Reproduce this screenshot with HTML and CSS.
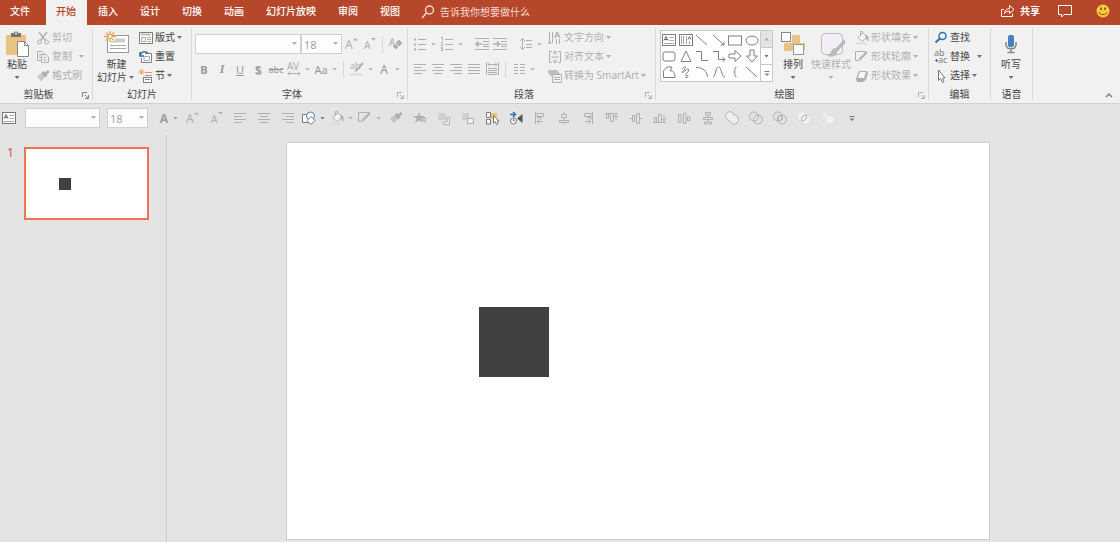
FILE: index.html
```html
<!DOCTYPE html>
<html lang="zh-CN">

<head>
    <meta charset="UTF-8">
    <meta name="viewport" content="width=device-width, initial-scale=1.0">
    <title>演示文稿</title>
    <link rel="stylesheet" href="styles.css">
</head>

<body>
    <!-- icon sprite -->
    <svg class="sprite" aria-hidden="true">
        <symbol id="i-search" viewBox="0 0 16 16"><circle cx="9.500" cy="6" r="4" stroke-width="1.400" /><path d="M6.500 9L2 14" stroke-width="1.400" /></symbol>
        <symbol id="i-share" viewBox="0 0 16 16"><path d="M4 6.500H1.500V13.500H12.500V10.500M4.500 10.500C5 7 7 5.500 9.500 5.500V2.500L14 6.500L9.500 10.500V8C7.500 8 6 8.500 4.500 10.500Z" /></symbol>
        <symbol id="i-comment" viewBox="0 0 16 16"><path d="M1.500 2.500H14.500V11.500H7L4.500 14V11.500H1.500Z" /></symbol>
        <symbol id="i-smile" viewBox="0 0 16 16"><circle cx="8" cy="8" r="6.500" fill="#fcc938" stroke="none" /><path d="M6 4.500V7M10 4.500V7" stroke="#6b4a1a" stroke-width="1.500" /><path d="M4 9C5 12.500 11 12.500 12 9" stroke="#8a4a1a" /></symbol>

        <symbol id="i-paste" viewBox="0 0 28 28"><path d="M3 5H23V25H3Z" fill="#eac282" stroke="none" /><path d="M8 3H11C11 1 15 1 15 3H18V7H8Z" fill="#777" stroke="none" /><circle cx="13" cy="3.500" r="1" fill="#f1f1f1" stroke="none" /><path d="M14.500 11.500H21.500L25.500 15.500V26.500H14.500Z" fill="#fff" stroke="#888" /><path d="M21.500 11.500V15.500H25.500" stroke="#888" /></symbol>
        <symbol id="i-cut" viewBox="0 0 16 16"><path d="M4 2L10.500 10.500M12 2L5.500 10.500" stroke-width="1.500" /><circle cx="4.500" cy="12" r="2" /><circle cx="11.500" cy="12" r="2" /></symbol>
        <symbol id="i-copy" viewBox="0 0 16 16"><path d="M6 11.500H2.500V2.500H7L9.500 5M4 5.500H6M4 8.500H6M6.500 5.500H11L13.500 8V13.500H6.500ZM8.500 8.500H11M8.500 11H12" /></symbol>
        <symbol id="i-brush" viewBox="0 0 16 16"><path d="M2 8L7 5L10 9L6 13.500Z" fill="currentColor" stroke="none" opacity=".6" /><path d="M7 5L9 3.500L12 7.500L10 9ZM10 5L13 2.500L14 4L12 6Z" fill="currentColor" /></symbol>
        <symbol id="i-newslide" viewBox="0 0 28 28"><rect x="4.500" y="5.500" width="21" height="17" fill="#fff" stroke="#999" /><path d="M12 8.500H22V12.500H8V11H12Z" fill="#ccc" stroke="none" /><path d="M7 15.500H23M7 18.500H23" stroke="#aaa" /><path d="M7 1V12M1 6.500H13M3 2.500L11 10.500M11 2.500L3 10.500" stroke="#e8ad58" stroke-width="1.500" /><circle cx="7" cy="6.500" r="2" fill="#fff" stroke="#e8ad58" /></symbol>
        <symbol id="i-layout" viewBox="0 0 16 16"><rect x="1.500" y="2.500" width="13" height="11" fill="#fff" /><path d="M3 4.500H13" stroke="#bbb" stroke-width="2" /><path d="M3.500 7.500H7.500V11.500H3.500ZM9 7.500H13M9 9.500H13M9 11.500H13" stroke="#aaa" /></symbol>
        <symbol id="i-reset" viewBox="0 0 16 16"><path d="M7 4.500H13.500V13.500H3.500V9" fill="#fff" /><path d="M6 7.500H11.500V11.500H6Z" stroke="#aaa" /><path d="M2 7C3 2.500 7 1.500 10 4M2 3V7H6" stroke="#2f6da8" stroke-width="1.500" /></symbol>
        <symbol id="i-section" viewBox="0 0 16 16"><path d="M7 4.500H14M7 7.500H14" stroke="#df8b66" /><rect x="5.500" y="9.500" width="8" height="5" fill="#fff" /><path d="M7 11.500H12" /><path d="M3.500 1V7M.5 4H6.500M1.500 2L5.500 6M5.500 2L1.500 6" stroke="#e8ad58" /></symbol>

        <symbol id="i-grow" viewBox="0 0 16 16"><text x="2" y="13" font-size="12">A</text><path d="M10 4.500L12.500 2L15 4.500Z" fill="currentColor" stroke="none" /></symbol>
        <symbol id="i-shrink" viewBox="0 0 16 16"><text x="3" y="13" font-size="10">A</text><path d="M10 2L12.500 4.500L15 2Z" fill="currentColor" stroke="none" /></symbol>
        <symbol id="i-clear" viewBox="0 0 16 16"><text x="1" y="10" font-size="10">A</text><path d="M4 10L11 3L15 7L8 14Z" fill="currentColor" stroke="#f1f1f1" /><path d="M7 7L11 11" stroke="#f1f1f1" /></symbol>
        <symbol id="i-spacing" viewBox="0 0 16 16"><text x="1" y="9" font-size="10">AV</text><path d="M2 12.500H14M4 10.500L2 12.500L4 14.500M12 10.500L14 12.500L12 14.500" /></symbol>
        <symbol id="i-highlight" viewBox="0 0 16 16"><text x="1" y="8" font-size="9">ab</text><path d="M14 2L8 9L6 10" stroke-width="2" /><path d="M1 13.500H14" stroke="#ddd" stroke-width="2" /></symbol>

        <symbol id="i-bullets" viewBox="0 0 16 16"><path d="M6 3.500H14M6 8.500H14M6 13.500H14" /><path d="M2 3.500H4M2 8.500H4M2 13.500H4" stroke-width="2" /></symbol>
        <symbol id="i-numbers" viewBox="0 0 16 16"><path d="M6 3.500H14M6 8.500H14M6 13.500H14" /><path d="M2 1.500H3.500V4.500M2 6.500H3.500V8L2 9.500H4M2 11.500H3.500V14.500H2M2 13H3.500" /></symbol>
        <symbol id="i-outdent" viewBox="0 0 16 16"><path d="M1 2.500H15M9 5.500H15M9 8.500H15M9 10.500H15M1 13.500H15" /><path d="M1.500 8H8M4.500 5.500L2 8L4.500 10.500" stroke-width="1.500" /></symbol>
        <symbol id="i-indent" viewBox="0 0 16 16"><path d="M1 2.500H15M9 5.500H15M9 8.500H15M9 10.500H15M1 13.500H15" /><path d="M1 8H7.500M5 5.500L7.500 8L5 10.500" stroke-width="1.500" /></symbol>
        <symbol id="i-lineheight" viewBox="0 0 16 16"><path d="M4.500 2.500V13.500M2 5L4.500 2.500L7 5M2 11L4.500 13.500L7 11M8 4.500H14M8 8.500H14M8 11.500H14" /></symbol>
        <symbol id="i-left" viewBox="0 0 16 16"><path d="M2 3.500H14M2 6.500H10M2 9.500H14M2 12.500H10" /></symbol>
        <symbol id="i-center" viewBox="0 0 16 16"><path d="M2 3.500H14M4 6.500H12M2 9.500H14M4 12.500H12" /></symbol>
        <symbol id="i-right" viewBox="0 0 16 16"><path d="M2 3.500H14M6 6.500H14M2 9.500H14M6 12.500H14" /></symbol>
        <symbol id="i-justify" viewBox="0 0 16 16"><path d="M2 3.500H14M2 6.500H14M2 9.500H14M2 12.500H14" /></symbol>
        <symbol id="i-distribute" viewBox="0 0 16 16"><path d="M2.500 1V14M14.500 1V14M4 3.500H13M6 1.500L4 3.500L6 5.500M11 1.500L13 3.500L11 5.500M4 7.500H13M4 9.500H13M4 11.500H13M4 13.500H13" /></symbol>
        <symbol id="i-columns" viewBox="0 0 16 16"><path d="M3 3.500H7M3 6.500H7M3 9.500H7M3 12.500H7M9 3.500H14M9 6.500H14M9 9.500H14M9 12.500H14" /></symbol>
        <symbol id="i-direction" viewBox="0 0 16 16"><path d="M2.500 2V13M5.500 2V13M9.500 9V14M12.500 9V14M1 12L2.500 14L4 12" /><text x="7" y="8" font-size="9" font-weight="bold">A</text></symbol>
        <symbol id="i-valign" viewBox="0 0 16 16"><path d="M5 2.500H2.500V13.500H5M11 2.500H13.500V13.500H11M4.500 8H11.500M8 2V6M6 4.500L8 2L10 4.500M8 10V14M6 11.500L8 14L10 11.500" /></symbol>
        <symbol id="i-smartart" viewBox="0 0 16 16"><path d="M1 2H10L13 6H5V9L3 7L1 5Z" fill="currentColor" stroke="none" opacity=".8" /><path d="M5.500 6.500H14.500V14.500H5.500ZM7 9.500H13M7 11.500H13" fill="#f1f1f1" /></symbol>

        <symbol id="i-textbox" viewBox="0 0 16 16"><rect x="1.500" y="2.500" width="13" height="11" fill="#fff" /><path d="M3 8.500L5 4.500L7 8.500M3.500 7.500H6.500" stroke="#4c7199" /><path d="M8.500 5.500H13M8.500 8.500H13M3 11.500H13" stroke="#aaa" /></symbol>
        <symbol id="i-vtextbox" viewBox="0 0 16 16"><rect x="1.500" y="2.500" width="13" height="11" fill="#fff" /><path d="M3.500 4V12M5.500 4V12M8.500 4V12M11.500 9V12" stroke="#aaa" /><path d="M10 7.500L11.500 4.500L13 7.500" stroke="#4c7199" /></symbol>
        <symbol id="i-line" viewBox="0 0 16 16"><path d="M2 3L13 13" /></symbol>
        <symbol id="i-arrow" viewBox="0 0 16 16"><path d="M2 3L13 13M13 9.500V13H9.500" /></symbol>
        <symbol id="i-rect" viewBox="0 0 16 16"><rect x="1.500" y="4" width="13" height="9" /></symbol>
        <symbol id="i-oval" viewBox="0 0 16 16"><ellipse cx="8" cy="8.500" rx="6" ry="4.500" /></symbol>
        <symbol id="i-round" viewBox="0 0 16 16"><rect x="2" y="4" width="12" height="9" rx="2" /></symbol>
        <symbol id="i-triangle" viewBox="0 0 16 16"><path d="M8 3L13 13.500H3Z" /></symbol>
        <symbol id="i-elbow" viewBox="0 0 16 16"><path d="M2 3.500H7.500V12.500H14" /></symbol>
        <symbol id="i-elbowarrow" viewBox="0 0 16 16"><path d="M2 3.500H7.500V11.500H14M11.500 9L14 11.500L11.500 14" /></symbol>
        <symbol id="i-rarrow" viewBox="0 0 16 16"><path d="M2 6H8V2.500L14 8L8 13.500V10H2Z" /></symbol>
        <symbol id="i-darrow" viewBox="0 0 16 16"><path d="M6 2V8H2.500L8 14L13.500 8H10V2Z" /></symbol>
        <symbol id="i-free" viewBox="0 0 16 16"><path d="M2.500 13.500V7L6 3H11L9 7C12 6 14 9 14 13.500Z" /></symbol>
        <symbol id="i-scribble" viewBox="0 0 16 16"><path d="M4 5C7 1 9 3 6 6C2 10 5 9 8 6C12 3 11 8 8 10C6 12 9 11 10 12C10 14 8 14 7 13" /></symbol>
        <symbol id="i-arc" viewBox="0 0 16 16"><path d="M2 3.500C9 3.500 13 7 13.500 13" /></symbol>
        <symbol id="i-curve" viewBox="0 0 16 16"><path d="M2 13C5 13 4 3 7.500 3S10 13 14 13" /></symbol>
        <symbol id="i-brace" viewBox="0 0 16 16"><path d="M9.500 3C7.500 3 8 5 8 6.500S7 8 6.500 8C7 8 8 8 8 9.500S7.500 13 9.500 13" /></symbol>
        <symbol id="i-more" viewBox="0 0 16 16"><path d="M5.500 6.500H10.500" /><path d="M5.500 8.500H10.500L8 11Z" fill="currentColor" stroke="none" /></symbol>
        <symbol id="i-arrange" viewBox="0 0 28 28"><path d="M13 5H21V13H26V20H13V21H5V13H13Z" fill="#eac282" stroke="none" /><rect x="2.500" y="2.500" width="9" height="9" fill="#fff" stroke="#888" /><rect x="14.500" y="14.500" width="10" height="10" fill="#fff" stroke="#999" /></symbol>
        <symbol id="i-quick" viewBox="0 0 28 28"><rect x="4.500" y="3.500" width="21" height="21" rx="4" fill="#f3eef5" stroke="#bbb" /><path d="M28 9L18 19L20 22L28 13Z" fill="#b0b6bf" stroke="none" /><path d="M18 18C14 18 15 24 10 26C17 28 21 25 20 21Z" fill="#bbb" stroke="none" /></symbol>
        <symbol id="i-fill" viewBox="0 0 16 16"><path d="M4 7.500L9 3L13 7L8 11.500Z" fill="#f8f4f8" /><path d="M6.500 6V1.500H8.500V4" /><path d="M12 5L14 7V11L12 8Z" fill="currentColor" /><path d="M2 13.500H13" stroke="#ddd" stroke-width="2" /></symbol>
        <symbol id="i-outline" viewBox="0 0 16 16"><path d="M12 2.500H1.500V11.500H5" /><path d="M13 3L7 9L5.500 11" stroke-width="2" /></symbol>
        <symbol id="i-effect" viewBox="0 0 16 16"><path d="M5 3H13L14 5L12 12L9 14H3L2 11Z" fill="currentColor" stroke="none" /><path d="M5.500 3.500H12.500L10.500 10.500H3Z" fill="#f8f4f8" /></symbol>
        <symbol id="i-find" viewBox="0 0 16 16"><circle cx="9.500" cy="6" r="3.500" stroke="#3570ad" stroke-width="1.500" /><path d="M7 8.500L2.500 12.500" stroke="#3570ad" stroke-width="2" /></symbol>
        <symbol id="i-replace" viewBox="0 0 16 16"><text x="1" y="7" font-size="9">ab</text><text x="5" y="14" font-size="9">ac</text><path d="M2 11.500H4.500M3 10L4.500 11.500L3 13" stroke="#3570ad" /></symbol>
        <symbol id="i-select" viewBox="0 0 16 16"><path d="M5.500 2V12.500L7.500 10.500L9.500 14.500L11 13.500L9.500 10H12Z" fill="#fff" stroke="#777" /></symbol>
        <symbol id="i-mic" viewBox="0 0 28 28"><rect x="11" y="5" width="6" height="12" rx="2" fill="#4682bd" stroke="none" /><path d="M9 12V15.500L11 18.500H17L19 15.500V12M14 19V22.500M10.500 22.500H17.500" stroke="#888" stroke-width="1.500" /></symbol>
        <symbol id="i-launch" viewBox="0 0 16 16"><path d="M5.500 10V5.500H10M8 8L11 11M11.500 8V11.500H8" /></symbol>
        <symbol id="i-collapse" viewBox="0 0 16 16"><path d="M5 10L8 7L11 10" stroke-width="1.500" /></symbol>

        <symbol id="i-shapes" viewBox="0 0 16 16"><path d="M1.500 4.500H8V12.500H1.500Z" fill="#fff" /><circle cx="9.500" cy="6" r="4" fill="#fff" stroke="#4682bd" /><path d="M10 6.500L14 10.500L10 14.500L6 10.500Z" fill="#fff" /></symbol>
        <symbol id="i-star" viewBox="0 0 16 16"><path d="M7 2L8.500 6H13L9.500 8.500L11 13L7 10.500L3 13L4.500 8.500L1 6H5.500Z" fill="currentColor" stroke="none" /><path d="M10 9L14 12M11 7L14 9" stroke-width="1.500" /></symbol>
        <symbol id="i-front" viewBox="0 0 16 16"><rect x="2" y="3" width="8" height="7" fill="#cfcfd1" stroke="none" /><path d="M11 7.500H13.500V14.500H7.500V12H11Z" fill="#f3f0f3" /></symbol>
        <symbol id="i-back" viewBox="0 0 16 16"><rect x="2" y="3" width="7" height="7" fill="#cfcfd1" stroke="none" /><rect x="7.500" y="8.500" width="6" height="5" fill="#f3f0f3" /></symbol>
        <symbol id="i-pane" viewBox="0 0 16 16"><path d="M7 3H13V9H7Z" fill="#eac282" stroke="none" /><path d="M2.500 2.500H6.500V7.500H2.500ZM2.500 9.500H6.500V14H2.500Z" fill="#fff" /><path d="M9.500 5.500V13L11 11.500L12.500 14.500L14 13.500L13 11H15Z" fill="#fff" /></symbol>
        <symbol id="i-anim" viewBox="0 0 16 16"><path d="M2 4.500H7M5 2L7.500 4.500L5 7" stroke="#3570ad" stroke-width="1.500" /><circle cx="5.500" cy="11" r="3" fill="#fff" /><path d="M5.500 9V11H7" /><path d="M9 8.500L14.500 4V13Z" fill="#555" stroke="none" /></symbol>
        <symbol id="i-al" viewBox="0 0 16 16"><path d="M3.500 2V14M5 3.500H11.500V6.500H5ZM5 7.500H9V9.500M5 11.500H11M7.500 9.500L5 11.500L7.500 14" /></symbol>
        <symbol id="i-ac" viewBox="0 0 16 16"><path d="M8 2V4M5.500 4.500H10.500V7.500H5.500ZM8 8V10M3.500 10.500H12.500V12.500H3.500ZM8 13V14.500" /></symbol>
        <symbol id="i-ar" viewBox="0 0 16 16"><path d="M12.500 2V14M4.500 3.500H11V6.500H4.500ZM7 7.500H11V9.500M5 11.500H10.500M8.500 9.500L10.500 11.500L8.500 14" /></symbol>
        <symbol id="i-at" viewBox="0 0 16 16"><path d="M1 3.500H14M2.500 4V8.500H4.500V4M6.500 4V11.500H9.500V4M12 10V5M10 7L12 5L14 7" /></symbol>
        <symbol id="i-am" viewBox="0 0 16 16"><path d="M2 8.500H4M4.500 5.500H6.500V11.500H4.500ZM8.500 3.500H11.500V13.500H8.500ZM12 8.500H14" /></symbol>
        <symbol id="i-ab" viewBox="0 0 16 16"><path d="M1 12.500H14M2.500 12V7.500H4.500V12M6.500 12V4.500H9.500V12M12 5V11M10 9L12 11L14 9" /></symbol>
        <symbol id="i-dh" viewBox="0 0 16 16"><path d="M2.500 4.500H5V12.500H2.500ZM7.500 3.500H10V13.500H7.500ZM11.500 7H14V10.500H11.500Z" /></symbol>
        <symbol id="i-dv" viewBox="0 0 16 16"><path d="M5.500 2.500H10.500V5H5.500ZM3.500 7.500H12.500V9.500H3.500ZM4.500 12H11.500V14H4.500ZM8 5V7M8 10V12" /></symbol>
        <symbol id="i-union" viewBox="0 0 16 16"><path d="M3 3C6 .5 9 2 10 5C14 5 16 10 13 13C10 16 6 13 6 11C2 10 0 6 3 3Z" fill="#eee" /></symbol>
        <symbol id="i-combine" viewBox="0 0 16 16"><circle cx="6" cy="6.500" r="4.500" /><circle cx="10" cy="9.500" r="4.500" /></symbol>
        <symbol id="i-fragment" viewBox="0 0 16 16"><circle cx="6" cy="6.500" r="4.500" /><circle cx="10" cy="9.500" r="4.500" /><circle cx="8" cy="8" r="2.500" /></symbol>
        <symbol id="i-intersect" viewBox="0 0 16 16"><g fill="#f4f0f6" stroke="#ccc" stroke-dasharray="1 2"><circle cx="6" cy="6.500" r="4.500" /><circle cx="10" cy="9.500" r="4.500" /></g><path d="M5.500 10.500C5 7 7 5 10.500 5.500C11 9 9 11 5.500 10.500Z" /></symbol>
        <symbol id="i-subtract" viewBox="0 0 16 16"><circle cx="6" cy="6.500" r="4.500" fill="#efecef" stroke="#ccc" stroke-dasharray="1 2" /><circle cx="10" cy="9.500" r="4.500" fill="#f6f1f8" stroke="#ddd" /></symbol>
    </svg>

    <header class="titlebar">
        <nav class="tabs">
            <a href="#" class="tab file">文件</a>
            <a href="#" class="tab active">开始</a>
            <a href="#" class="tab">插入</a>
            <a href="#" class="tab">设计</a>
            <a href="#" class="tab">切换</a>
            <a href="#" class="tab">动画</a>
            <a href="#" class="tab">幻灯片放映</a>
            <a href="#" class="tab">审阅</a>
            <a href="#" class="tab">视图</a>
        </nav>
        <label class="search">
            <svg class="icon"><use href="#i-search" /></svg>
            <input type="text" placeholder="告诉我你想要做什么" aria-label="告诉我你想要做什么">
        </label>
        <div class="account">
            <button class="share"><svg class="icon"><use href="#i-share" /></svg>共享</button>
            <button aria-label="批注"><svg class="icon"><use href="#i-comment" /></svg></button>
            <button aria-label="反馈"><svg class="icon"><use href="#i-smile" /></svg></button>
        </div>
    </header>

    <div class="ribbon">
        <section class="group clipboard">
            <div class="group-body">
                <button class="big"><svg><use href="#i-paste" /></svg><span>粘贴</span><span><i class="caret"></i></span></button>
                <div class="stack">
                    <button class="small off"><svg class="icon"><use href="#i-cut" /></svg>剪切</button>
                    <button class="small off split"><svg class="icon"><use href="#i-copy" /></svg>复制<i class="caret"></i></button>
                    <button class="small off"><svg class="icon"><use href="#i-brush" /></svg>格式刷</button>
                </div>
            </div>
            <div class="group-label"><span>剪贴板</span><button class="launcher" aria-label="剪贴板选项"><svg class="icon"><use href="#i-launch" /></svg></button></div>
        </section>

        <section class="group slides">
            <div class="group-body">
                <button class="big"><svg><use href="#i-newslide" /></svg><span>新建</span><span>幻灯片<i class="caret"></i></span></button>
                <div class="stack">
                    <button class="small"><svg class="icon"><use href="#i-layout" /></svg>版式<i class="caret"></i></button>
                    <button class="small"><svg class="icon"><use href="#i-reset" /></svg>重置</button>
                    <button class="small"><svg class="icon"><use href="#i-section" /></svg>节<i class="caret"></i></button>
                </div>
            </div>
            <div class="group-label"><span>幻灯片</span></div>
        </section>

        <section class="group font">
            <div class="group-body rows off">
                <div class="row">
                    <span class="picker family"><select aria-label="字体"><option></option></select><i class="caret"></i></span>
                    <span class="picker size"><select aria-label="字号"><option>18</option></select><i class="caret"></i></span>
                    <button class="tool" aria-label="增大字号"><svg class="icon"><use href="#i-grow" /></svg></button>
                    <button class="tool" aria-label="减小字号"><svg class="icon"><use href="#i-shrink" /></svg></button>
                    <span class="sep"></span>
                    <button class="tool" aria-label="清除格式"><svg class="icon"><use href="#i-clear" /></svg></button>
                </div>
                <div class="row">
                    <button class="tool"><b>B</b></button>
                    <button class="tool serif"><em>I</em></button>
                    <button class="tool"><u>U</u></button>
                    <button class="tool shadow">S</button>
                    <button class="tool strike"><s>abc</s></button>
                    <button class="tool wide" aria-label="字符间距"><svg class="icon"><use href="#i-spacing" /></svg><i class="caret"></i></button>
                    <button class="tool wide"><span>Aa</span><i class="caret"></i></button>
                    <span class="sep"></span>
                    <button class="tool wide" aria-label="突出显示"><svg class="icon"><use href="#i-highlight" /></svg><i class="caret"></i></button>
                    <button class="tool wide color"><span>A</span><i class="caret"></i></button>
                </div>
            </div>
            <div class="group-label"><span>字体</span><button class="launcher off" aria-label="字体选项"><svg class="icon"><use href="#i-launch" /></svg></button></div>
        </section>

        <section class="group paragraph">
            <div class="group-body">
                <div class="rows off">
                    <div class="row">
                        <button class="tool wide" aria-label="项目符号"><svg class="icon"><use href="#i-bullets" /></svg><i class="caret"></i></button>
                        <button class="tool wide" aria-label="编号"><svg class="icon"><use href="#i-numbers" /></svg><i class="caret"></i></button>
                        <span class="sep"></span>
                        <button class="tool" aria-label="减少缩进"><svg class="icon"><use href="#i-outdent" /></svg></button>
                        <button class="tool" aria-label="增加缩进"><svg class="icon"><use href="#i-indent" /></svg></button>
                        <span class="sep"></span>
                        <button class="tool wide" aria-label="行距"><svg class="icon"><use href="#i-lineheight" /></svg><i class="caret"></i></button>
                    </div>
                    <div class="row">
                        <button class="tool" aria-label="左对齐"><svg class="icon"><use href="#i-left" /></svg></button>
                        <button class="tool" aria-label="居中"><svg class="icon"><use href="#i-center" /></svg></button>
                        <button class="tool" aria-label="右对齐"><svg class="icon"><use href="#i-right" /></svg></button>
                        <button class="tool" aria-label="两端对齐"><svg class="icon"><use href="#i-justify" /></svg></button>
                        <button class="tool" aria-label="分散对齐"><svg class="icon"><use href="#i-distribute" /></svg></button>
                        <span class="sep"></span>
                        <button class="tool wide" aria-label="分栏"><svg class="icon"><use href="#i-columns" /></svg><i class="caret"></i></button>
                    </div>
                </div>
                <div class="stack">
                    <button class="small off"><svg class="icon"><use href="#i-direction" /></svg>文字方向<i class="caret"></i></button>
                    <button class="small off"><svg class="icon"><use href="#i-valign" /></svg>对齐文本<i class="caret"></i></button>
                    <button class="small off"><svg class="icon"><use href="#i-smartart" /></svg>转换为 SmartArt<i class="caret"></i></button>
                </div>
            </div>
            <div class="group-label"><span>段落</span><button class="launcher off" aria-label="段落选项"><svg class="icon"><use href="#i-launch" /></svg></button></div>
        </section>

        <section class="group drawing">
            <div class="group-body">
                <div class="gallery">
                    <div class="shapes">
                        <button aria-label="文本框"><svg class="icon"><use href="#i-textbox" /></svg></button>
                        <button aria-label="竖排文本框"><svg class="icon"><use href="#i-vtextbox" /></svg></button>
                        <button aria-label="直线"><svg class="icon"><use href="#i-line" /></svg></button>
                        <button aria-label="箭头"><svg class="icon"><use href="#i-arrow" /></svg></button>
                        <button aria-label="矩形"><svg class="icon"><use href="#i-rect" /></svg></button>
                        <button aria-label="椭圆"><svg class="icon"><use href="#i-oval" /></svg></button>
                        <button aria-label="圆角矩形"><svg class="icon"><use href="#i-round" /></svg></button>
                        <button aria-label="三角形"><svg class="icon"><use href="#i-triangle" /></svg></button>
                        <button aria-label="肘形连接符"><svg class="icon"><use href="#i-elbow" /></svg></button>
                        <button aria-label="肘形箭头"><svg class="icon"><use href="#i-elbowarrow" /></svg></button>
                        <button aria-label="右箭头"><svg class="icon"><use href="#i-rarrow" /></svg></button>
                        <button aria-label="下箭头"><svg class="icon"><use href="#i-darrow" /></svg></button>
                        <button aria-label="任意多边形"><svg class="icon"><use href="#i-free" /></svg></button>
                        <button aria-label="自由曲线"><svg class="icon"><use href="#i-scribble" /></svg></button>
                        <button aria-label="弧形"><svg class="icon"><use href="#i-arc" /></svg></button>
                        <button aria-label="曲线"><svg class="icon"><use href="#i-curve" /></svg></button>
                        <button aria-label="左大括号"><svg class="icon"><use href="#i-brace" /></svg></button>
                        <button aria-label="线条"><svg class="icon"><use href="#i-line" /></svg></button>
                    </div>
                    <div class="scroller">
                        <button class="up" aria-label="上一行"><i class="caret"></i></button>
                        <button aria-label="下一行"><i class="caret"></i></button>
                        <button aria-label="更多形状"><svg class="icon"><use href="#i-more" /></svg></button>
                    </div>
                </div>
                <button class="big"><svg><use href="#i-arrange" /></svg><span>排列</span><span><i class="caret"></i></span></button>
                <button class="big off"><svg><use href="#i-quick" /></svg><span>快速样式</span><span><i class="caret"></i></span></button>
                <div class="stack">
                    <button class="small off"><svg class="icon"><use href="#i-fill" /></svg>形状填充<i class="caret"></i></button>
                    <button class="small off"><svg class="icon"><use href="#i-outline" /></svg>形状轮廓<i class="caret"></i></button>
                    <button class="small off"><svg class="icon"><use href="#i-effect" /></svg>形状效果<i class="caret"></i></button>
                </div>
            </div>
            <div class="group-label"><span>绘图</span><button class="launcher off" aria-label="形状选项"><svg class="icon"><use href="#i-launch" /></svg></button></div>
        </section>

        <section class="group editing">
            <div class="group-body">
                <div class="stack">
                    <button class="small"><svg class="icon"><use href="#i-find" /></svg>查找</button>
                    <button class="small split"><svg class="icon"><use href="#i-replace" /></svg>替换<i class="caret"></i></button>
                    <button class="small"><svg class="icon"><use href="#i-select" /></svg>选择<i class="caret"></i></button>
                </div>
            </div>
            <div class="group-label"><span>编辑</span></div>
        </section>

        <section class="group voice">
            <div class="group-body">
                <button class="big"><svg><use href="#i-mic" /></svg><span>听写</span><span><i class="caret"></i></span></button>
            </div>
            <div class="group-label"><span>语音</span></div>
        </section>

        <button class="collapse" aria-label="折叠功能区"><svg class="icon"><use href="#i-collapse" /></svg></button>
    </div>

    <div class="quickbar off">
        <button class="dark first" aria-label="文本框"><svg class="icon"><use href="#i-textbox" /></svg></button>
        <span class="picker family"><select aria-label="字体"><option></option></select><i class="caret"></i></span>
        <span class="picker size"><select aria-label="字号"><option>18</option></select><i class="caret"></i></span>
        <button class="wide letter"><b>A</b><i class="caret"></i></button>
        <button aria-label="增大字号"><svg class="icon"><use href="#i-grow" /></svg></button>
        <button aria-label="减小字号"><svg class="icon"><use href="#i-shrink" /></svg></button>
        <button aria-label="左对齐"><svg class="icon"><use href="#i-left" /></svg></button>
        <button aria-label="居中"><svg class="icon"><use href="#i-center" /></svg></button>
        <button aria-label="右对齐"><svg class="icon"><use href="#i-right" /></svg></button>
        <button class="wide dark" aria-label="形状"><svg class="icon"><use href="#i-shapes" /></svg><i class="caret"></i></button>
        <button class="wide" aria-label="形状填充"><svg class="icon"><use href="#i-fill" /></svg><i class="caret"></i></button>
        <button class="wide" aria-label="形状轮廓"><svg class="icon"><use href="#i-outline" /></svg><i class="caret"></i></button>
        <button aria-label="格式刷"><svg class="icon"><use href="#i-brush" /></svg></button>
        <button aria-label="动画刷"><svg class="icon"><use href="#i-star" /></svg></button>
        <button aria-label="置于顶层"><svg class="icon"><use href="#i-front" /></svg></button>
        <button aria-label="置于底层"><svg class="icon"><use href="#i-back" /></svg></button>
        <button class="dark" aria-label="选择窗格"><svg class="icon"><use href="#i-pane" /></svg></button>
        <button class="dark" aria-label="动画窗格"><svg class="icon"><use href="#i-anim" /></svg></button>
        <button aria-label="左侧对齐"><svg class="icon"><use href="#i-al" /></svg></button>
        <button aria-label="水平居中"><svg class="icon"><use href="#i-ac" /></svg></button>
        <button aria-label="右侧对齐"><svg class="icon"><use href="#i-ar" /></svg></button>
        <button aria-label="顶端对齐"><svg class="icon"><use href="#i-at" /></svg></button>
        <button aria-label="垂直居中"><svg class="icon"><use href="#i-am" /></svg></button>
        <button aria-label="底端对齐"><svg class="icon"><use href="#i-ab" /></svg></button>
        <button aria-label="横向分布"><svg class="icon"><use href="#i-dh" /></svg></button>
        <button aria-label="纵向分布"><svg class="icon"><use href="#i-dv" /></svg></button>
        <button aria-label="结合"><svg class="icon"><use href="#i-union" /></svg></button>
        <button aria-label="组合"><svg class="icon"><use href="#i-combine" /></svg></button>
        <button aria-label="拆分"><svg class="icon"><use href="#i-fragment" /></svg></button>
        <button aria-label="相交"><svg class="icon"><use href="#i-intersect" /></svg></button>
        <button aria-label="剪除"><svg class="icon"><use href="#i-subtract" /></svg></button>
        <button class="dark" aria-label="自定义快速访问工具栏"><svg class="icon"><use href="#i-more" /></svg></button>
    </div>

    <main class="workspace">
        <aside class="thumbs">
            <span class="number">1</span>
            <div class="slide thumb"><div class="square"></div></div>
        </aside>
        <div class="stage">
            <div class="slide page"><div class="square"></div></div>
        </div>
    </main>
</body>

</html>
```
FILE: styles.css
```css
* {
    box-sizing: border-box;
}

body {
    margin: 0;
    min-height: 100vh;
    display: flex;
    flex-direction: column;
    background-color: #e4e4e4;
    color: #444;
    font-family: "Noto Sans", "Noto Sans CJK SC", sans-serif;
    font-size: 10px;
    line-height: 13px;
}

button,
input,
select {
    font: inherit;
    color: inherit;
    background: none;
    border: none;
    padding: 0;
    margin: 0;
}

button {
    display: flex;
    align-items: center;
    justify-content: center;
    flex-shrink: 0;
    white-space: nowrap;
}

svg {
    fill: none;
    stroke: currentColor;
    display: block;
    flex-shrink: 0;
}

svg text {
    fill: currentColor;
    stroke: none;
}

.sprite {
    display: none;
}

.icon {
    width: 16px;
    height: 16px;
}

.caret {
    display: inline-block;
    flex-shrink: 0;
    width: 5px;
    height: 3px;
    margin: 0 2px;
    background-color: currentColor;
    clip-path: polygon(0 0, 100% 0, 50% 100%);
}

/* title bar */
.titlebar {
    display: flex;
    height: 25px;
    background-color: #b7472a;
    color: #fff;
}

.tabs {
    display: flex;
}

.tab {
    padding: 0 11px;
    line-height: 22px;
    font-weight: 500;
    color: #fff;
    text-decoration: none;
}

.tab.file {
    padding: 0 16px 0 10px;
}

.tab.active {
    padding: 0 11px 0 10px;
    background-color: #f1f1f1;
    color: #b7472a;
}

.search {
    display: flex;
    align-items: center;
    gap: 4px;
    margin-left: 9px;
    padding-bottom: 1px;
    color: #f6dcd4;
}

.search input {
    width: 120px;
    height: 20px;
    outline: none;
}

.search input::placeholder {
    color: #f6dcd4;
    opacity: 1;
}

.account {
    display: flex;
    align-items: center;
    gap: 17px;
    margin-left: auto;
    padding: 0 9px 3px 0;
}

.account button + button + button {
    margin-left: 5px;
}

.share {
    gap: 4px;
    font-weight: bold;
}

/* ribbon */
.ribbon {
    display: flex;
    height: 79px;
    padding-top: 3px;
    background-color: #f1f1f1;
    border-bottom: 1px solid #d2d2d2;
}

.ribbon svg {
    color: #808080;
}

.ribbon .caret {
    color: #707070;
}

.ribbon .off svg,
.ribbon .off.launcher svg,
.ribbon .off .caret {
    color: #b0b0b0;
}

.group {
    display: flex;
    flex-direction: column;
    flex-shrink: 0;
    height: 72px;
    border-right: 1px solid #d8d8d8;
}

.clipboard { width: 93px; }
.slides { width: 99px; }
.font { width: 216px; }
.paragraph { width: 248px; }
.drawing { width: 273px; }
.editing { width: 62px; }
.voice { width: 42px; }

.group-body {
    display: flex;
    flex-shrink: 0;
    height: 57px;
}

.group-label {
    display: flex;
    flex-shrink: 0;
    height: 18px;
    align-items: center;
}

.group-label span {
    flex: 1;
    text-align: center;
}

.launcher {
    width: 15px;
    overflow: hidden;
    padding-top: 2px;
}

.off {
    color: #b0b0b0;
}

.big {
    flex-direction: column;
    justify-content: flex-start;
    width: 34px;
    padding-top: 2px;
}

.big svg {
    width: 28px;
    height: 28px;
}

.big span {
    display: flex;
    align-items: center;
    height: 13px;
}

.slides .big {
    width: 41px;
    margin-left: 3px;
}

.stack {
    display: flex;
    flex-direction: column;
    align-items: flex-start;
}

.clipboard .stack,
.slides .stack {
    margin-left: 1px;
}

.small {
    height: 19px;
}

.small .icon {
    margin-right: 1px;
}

.small.split .caret {
    margin-left: 7px;
}

.rows {
    display: flex;
    flex-direction: column;
    justify-content: center;
    gap: 5px;
    width: 136px;
    padding-left: 3px;
}

.group-body.rows {
    width: auto;
}

.row {
    display: flex;
    align-items: center;
    height: 20px;
}

.tool {
    width: 18px;
    height: 20px;
    font-size: 11px;
    color: #999;
}

.tool.wide {
    width: 27px;
    justify-content: flex-start;
    padding-left: 1px;
}

.tool.wide .caret {
    margin-left: 3px;
}

.tool.wide span {
    width: 16px;
    text-align: center;
}

.tool.color {
    font-size: 12px;
}

.tool.serif {
    font-family: "Liberation Serif", serif;
    font-size: 12px;
    font-weight: bold;
}

.tool.shadow {
    font-weight: bold;
    text-shadow: 1px 1px 1px #bbb;
}

.tool.strike {
    font-size: 9px;
}

.sep {
    width: 1px;
    height: 17px;
    margin: 0 4px;
    background-color: #d8d8d8;
}

.picker {
    position: relative;
    flex-shrink: 0;
    height: 20px;
    font-size: 11px;
}

.picker select {
    display: block;
    appearance: none;
    width: 100%;
    height: 100%;
    padding: 0 2px;
    border: 1px solid #d0d0d0;
    background-color: #fdfdfd;
    color: #a9a29f;
}

.picker .caret {
    position: absolute;
    right: 2px;
    top: 8px;
}

.font .family {
    width: 106px;
}

.picker.size {
    width: 41px;
}

.paragraph .stack {
    margin-left: 3px;
}

/* shape gallery */
.gallery {
    display: flex;
    width: 113px;
    height: 52px;
    margin: 2px 3px 0 4px;
    border: 1px solid #c8c8c8;
    background-color: #fff;
}

.shapes {
    flex: 1;
    display: grid;
    grid-template-columns: repeat(6, 1fr);
    grid-template-rows: repeat(3, 16px);
    padding-top: 1px;
}

.scroller {
    display: flex;
    flex-direction: column;
    width: 12px;
    border-left: 1px solid #c8c8c8;
}

.scroller button {
    flex: 1;
    min-height: 0;
    overflow: hidden;
}

.scroller button + button {
    border-top: 1px solid #c8c8c8;
}

.scroller .up {
    background-color: #e4e4e4;
}

.scroller .up .caret {
    color: #b0b0b0;
    clip-path: polygon(50% 0, 100% 100%, 0 100%);
}

.drawing .big.off {
    width: 42px;
}

.drawing .stack {
    margin-left: 2px;
}

.editing .stack {
    margin-left: 4px;
}

.voice .big {
    margin-left: 3px;
}

.collapse {
    align-self: flex-end;
    margin: 0 3px 0 auto;
}

/* quick access toolbar */
.quickbar {
    display: flex;
    align-items: center;
    height: 28px;
    color: #b0b0b0;
}

.quickbar button {
    width: 24px;
    height: 20px;
}

.quickbar .wide {
    width: 28px;
}

.quickbar .wide .caret {
    margin-left: 3px;
}

.quickbar .dark {
    color: #777;
}

.quickbar .first {
    width: 17px;
}

.quickbar .letter {
    justify-content: flex-end;
    gap: 2px;
    font-size: 12px;
    color: #a0a0a0;
}

.quickbar .family {
    width: 75px;
    margin: 0 7px 0 8px;
}

.quickbar .size {
    margin-right: 4px;
}

/* slides */
.workspace {
    flex: 1;
    display: flex;
    padding-top: 3px;
}

.thumbs {
    display: flex;
    align-items: flex-start;
    width: 167px;
    padding: 12px 17px 0 7px;
    border-right: 1px solid #cfcfcf;
}

.number {
    width: 17px;
    font-size: 12px;
    line-height: 11px;
    color: #c8573a;
}

.stage {
    flex: 1;
    padding: 7px 130px 2px 119px;
}

.slide {
    position: relative;
    background-color: #fff;
}

.page {
    aspect-ratio: 704 / 398;
    border: 1px solid #cfcfcf;
}

.thumb {
    flex: 1;
    height: 73px;
    border: 2px solid #f07352;
}

.square {
    position: absolute;
    left: 27.3%;
    top: 41.4%;
    width: 10%;
    aspect-ratio: 1;
    background-color: #404040;
}
```
